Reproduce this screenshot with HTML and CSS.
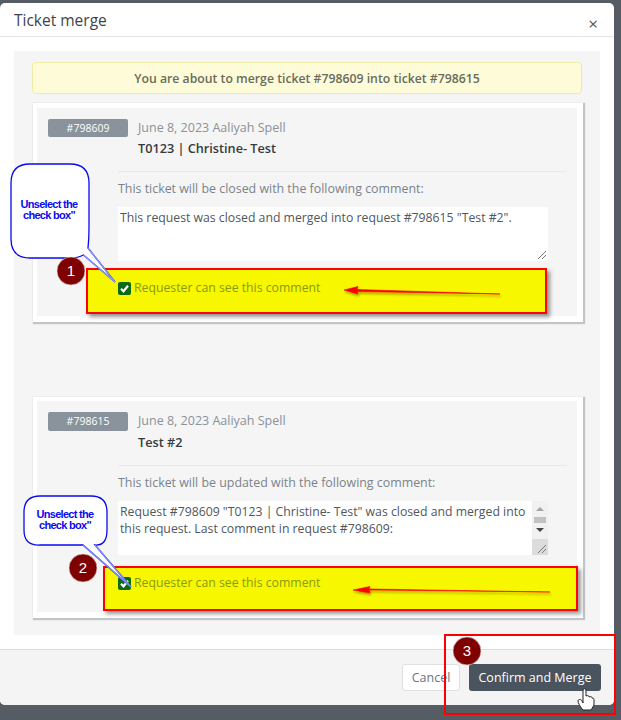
FILE: index.html
```html
<!DOCTYPE html>
<html lang="en">
<head>
<meta charset="utf-8">
<title>Ticket merge</title>
<link rel="stylesheet" href="styles.css">
</head>
<body>
<div class="modal">
  <header class="modal-header">
    <h1 class="modal-title">Ticket merge</h1>
    <span class="close">×</span>
  </header>
  <main class="modal-body">
    <div class="panel">
      <div class="alert">You are about to merge ticket #798609 into ticket #798615</div>
      <section class="card card-first">
        <div class="card-inner">
          <div class="ticket-head">
            <span class="badge">#798609</span>
            <div class="ticket-meta">
              <div class="date">June 8, 2023 Aaliyah Spell</div>
              <div class="subject">T0123 | Christine- Test</div>
            </div>
          </div>
          <div class="comment">
            <hr class="rule">
            <p class="label">This ticket will be closed with the following comment:</p>
            <div class="textarea">
              <div class="textarea-text">This request was closed and merged into request #798615 "Test #2".</div>
              <svg class="grip" viewBox="0 0 10 10"><path d="M1 9 9 1M5 9 9 5" stroke="#777" fill="none"/></svg>
            </div>
            <label class="check-row">
              <svg class="check" viewBox="0 0 13 13"><rect width="13" height="13" rx="2" fill="#0b6b12"/><path d="M3 6.800 5.500 9.300 10 3.800" stroke="#fff" stroke-width="2.200" fill="none"/></svg>
              <span>Requester can see this comment</span>
            </label>
          </div>
        </div>
      </section>
      <section class="card card-second">
        <div class="card-inner">
          <div class="ticket-head">
            <span class="badge">#798615</span>
            <div class="ticket-meta">
              <div class="date">June 8, 2023 Aaliyah Spell</div>
              <div class="subject">Test #2</div>
            </div>
          </div>
          <div class="comment">
            <hr class="rule">
            <p class="label">This ticket will be updated with the following comment:</p>
            <div class="textarea">
              <div class="textarea-text">Request #798609 "T0123 | Christine- Test" was closed and merged into this request. Last comment in request #798609:</div>
              <div class="scrollbar">
                <span class="arrow-up"></span>
                <span class="thumb"></span>
                <span class="arrow-down"></span>
                <span class="scroll-corner"><svg class="grip" viewBox="0 0 10 10"><path d="M1 9 9 1M5 9 9 5" stroke="#777" fill="none"/></svg></span>
              </div>
            </div>
            <label class="check-row">
              <svg class="check" viewBox="0 0 13 13"><rect width="13" height="13" rx="2" fill="#0b6b12"/><path d="M3 6.800 5.500 9.300 10 3.800" stroke="#fff" stroke-width="2.200" fill="none"/></svg>
              <span>Requester can see this comment</span>
            </label>
          </div>
        </div>
      </section>
    </div>
  </main>
  <footer class="modal-footer">
    <button class="btn btn-cancel">Cancel</button>
    <button class="btn btn-confirm">Confirm and Merge</button>
  </footer>
</div>

<div class="highlight highlight-one"></div>
<div class="highlight highlight-two"></div>
<div class="outline-three"></div>

<svg class="marks" viewBox="0 0 621 720" width="621" height="720">
  <defs>
    <filter id="soft" x="-10%" y="-300%" width="120%" height="700%"><feDropShadow dx="1" dy="2" stdDeviation="1" flood-color="#000" flood-opacity=".35"/></filter>
  </defs>
  <path d="M500 294 357 291.500 358 294 344 290 358 286.500 357 289.500Z" fill="#f00" stroke="#f00" stroke-width=".6" filter="url(#soft)"/>
  <path d="M550 592 369 590 370 593 353 590 370 586.500 369 589Z" fill="#f00" stroke="#f00" stroke-width=".6" filter="url(#soft)"/>

  <path d="M30 164H70Q89 164 89 183V228Q89 239 88 248L115 282 83.500 255Q78 258 70 258H30Q11 258 11 239V183Q11 164 30 164Z" fill="#fff" stroke="#0a0aee" stroke-width="1.300"/>
  <path d="M88 248 115 282 83.500 255" fill="none" stroke="#8f9bf0" stroke-width="1.200"/>

  <path d="M40 496H91Q107 496 107 512V530Q107 546 95 545L131 587 83 545H40Q24 546 24 530V512Q24 496 40 496Z" fill="#fff" stroke="#0a0aee" stroke-width="1.300"/>
  <path d="M95 545 131 587 83 545" fill="none" stroke="#7f8cf0" stroke-width="1.300"/>

  <g fill="#7f0000" stroke="#e8dcdc" stroke-width=".6">
    <circle cx="71" cy="271" r="14"/>
    <circle cx="83" cy="568" r="14"/>
    <circle cx="467" cy="651" r="14"/>
  </g>

  <path d="M582 709C580 706 578 703 578 701 578 699 581 699 582 701L583 703V691C583 688 586 688 586 691V696C588 695 589 696 589 697 591 696 592 697 592 698 594 698 594 699 594 701V704C594 706 592 708 591 710H583Z" fill="#fff" stroke="#222" stroke-width="1"/>
</svg>

<div class="callout-text callout-text-one">Unselect the<br>check box"</div>
<div class="callout-text callout-text-two">Unselect the<br>check box"</div>
<div class="num num-one">1</div>
<div class="num num-two">2</div>
<div class="num num-three">3</div>
</body>
</html>
```
FILE: styles.css
```css
* { box-sizing: border-box; }
html, body { margin: 0; height: 720px; overflow: hidden; }
body {
  position: relative;
  width: 621px;
  padding-top: 3px;
  background: #555c63;
  font-family: "Open Sans", "Noto Sans", sans-serif;
  color: #6c757d;
  font-size: 12.250px;
}
.modal {
  width: 614px;
  height: 702px;
  background: #fff;
  border-radius: 5px;
  display: flex;
  flex-direction: column;
  overflow: hidden;
}
.modal-header {
  height: 34px;
  flex: none;
  border-bottom: 1px solid #e3e6e8;
  display: flex;
  justify-content: space-between;
  align-items: center;
  padding: 0 14px;
}
.modal-title { margin: 0; font-size: 15.500px; font-weight: 400; color: #3d444b; }
.close { font-size: 17px; color: #555; margin-top: 7px; margin-right: 2px; }
.modal-body { flex: 1; padding: 14px 14px 14px; }
.panel { height: 584px; background: #f5f5f5; padding: 11px 18px 0 18px; }
.alert {
  width: 550px;
  height: 32px;
  background: #fdfbd8;
  border: 1px solid #efeaa4;
  border-radius: 4px;
  display: flex;
  align-items: center;
  justify-content: center;
  font-weight: 600;
  font-size: 12.250px;
  color: #6a6c5c;
}
.card {
  width: 550px;
  margin-left: 1px;
  background: #fff;
  padding: 5px 6px 6px 4px;
  box-shadow: 1px 1px 1px 1px #c0c5c9;
}
.card-first { height: 219px; margin-top: 9px; }
.card-second { height: 221px; margin-top: 75px; }
.card-second .card-inner { padding-top: 11px; }
.card-inner { height: 100%; background: #f5f5f5; padding: 11px 10px 0 11px; }
.ticket-head { display: flex; gap: 10px; height: 52px; }
.card-second { padding-top: 4px; }
.card-second .ticket-head { height: 53px; }
.card-second .badge { height: 19px; line-height: 19px; }
.card-second .subject { margin-top: 1px; }
.badge {
  width: 80px;
  height: 18px;
  background: #8a939c;
  border-radius: 2px;
  color: #fff;
  font-size: 10.500px;
  font-weight: 500;
  text-align: center;
  line-height: 18px;
  flex: none;
}
.ticket-meta { margin-top: -1px; }
.date { color: #8b9299; font-size: 12.500px; line-height: 20px; }
.subject { color: #343a40; font-size: 12.700px; font-weight: 600; line-height: 21px; }
.comment { margin-left: 70px; }
.rule { margin: 0; border: 0; border-top: 1px solid #e8e8e8; }
.label { margin: 8px 0 9px; font-size: 12.400px; line-height: 18px; color: #7b838a; }
.textarea {
  width: 430px;
  height: 54px;
  background: #fff;
  position: relative;
  display: flex;
}
.textarea-text { flex: 1; padding: 2px 2px 0 2px; line-height: 17px; color: #50575e; font-size: 12.250px; }
.grip { position: absolute; right: 1px; bottom: 1px; width: 10px; height: 10px; }
.scrollbar { width: 16px; flex: none; background: #f1f1f1; position: relative; display: flex; flex-direction: column; align-items: center; }
.arrow-up { margin-top: 6px; border: 4px solid transparent; border-top: 0; border-bottom: 4px solid #a5a5a5; }
.thumb { width: 12px; height: 6px; background: #c1c1c1; margin-top: 6px; }
.arrow-down { margin-top: 5px; border: 4px solid transparent; border-bottom: 0; border-top: 4px solid #444; }
.scroll-corner { position: absolute; left: 0; bottom: 0; width: 16px; height: 16px; background: #dcdcdc; }
.check-row {
  position: relative;
  z-index: 2;
  display: flex;
  align-items: center;
  gap: 3px;
  margin-top: 19px;
  color: #8a9a10;
  font-size: 12.250px;
  line-height: 16px;
}
.card-second .check-row { margin-top: 20px; }
.check { width: 13px; height: 13px; flex: none; }
.modal-footer {
  height: 56px;
  flex: none;
  background: #f4f4f4;
  border-top: 1px solid #dcdcdc;
  display: flex;
  justify-content: flex-end;
  align-items: flex-start;
  gap: 9px;
  padding: 14px 13px 0 0;
}
.btn { height: 27px; border-radius: 3px; font: inherit; font-size: 12.500px; padding: 0; }
.btn-cancel { width: 58px; background: #fff; border: 1px solid #e0e0e0; color: #6c757d; }
.btn-confirm { width: 132px; background: #4a545e; border: 0; color: #fff; }
.highlight {
  position: absolute;
  z-index: 1;
  background: #f7f700;
  border: 2px solid #f00;
  box-shadow: 3px 3px 4px rgba(0, 0, 0, .4);
}
.highlight-one { left: 86px; top: 268px; width: 461px; height: 46px; }
.highlight-two { left: 103px; top: 566px; width: 475px; height: 45px; }
.outline-three { position: absolute; z-index: 3; left: 444px; top: 634px; width: 172px; height: 81px; border: 2px solid #f00; }
.marks { position: absolute; z-index: 3; left: 0; top: 0; }
.callout-text {
  position: absolute;
  z-index: 4;
  font-family: "Liberation Sans", Arial, sans-serif;
  font-size: 11px;
  font-weight: 700;
  letter-spacing: -.7px;
  line-height: 11px;
  color: #0a0aee;
  text-align: center;
  width: 78px;
}
.callout-text-one { left: 10px; top: 199px; }
.callout-text-two { left: 26px; top: 509px; }
.num {
  position: absolute;
  z-index: 4;
  width: 28px;
  text-align: center;
  font-family: "Liberation Sans", Arial, sans-serif;
  font-size: 15px;
  line-height: 18px;
  color: #fff;
}
.num-one { left: 57px; top: 262px; }
.num-two { left: 69px; top: 559px; }
.num-three { left: 453px; top: 642px; }
```
